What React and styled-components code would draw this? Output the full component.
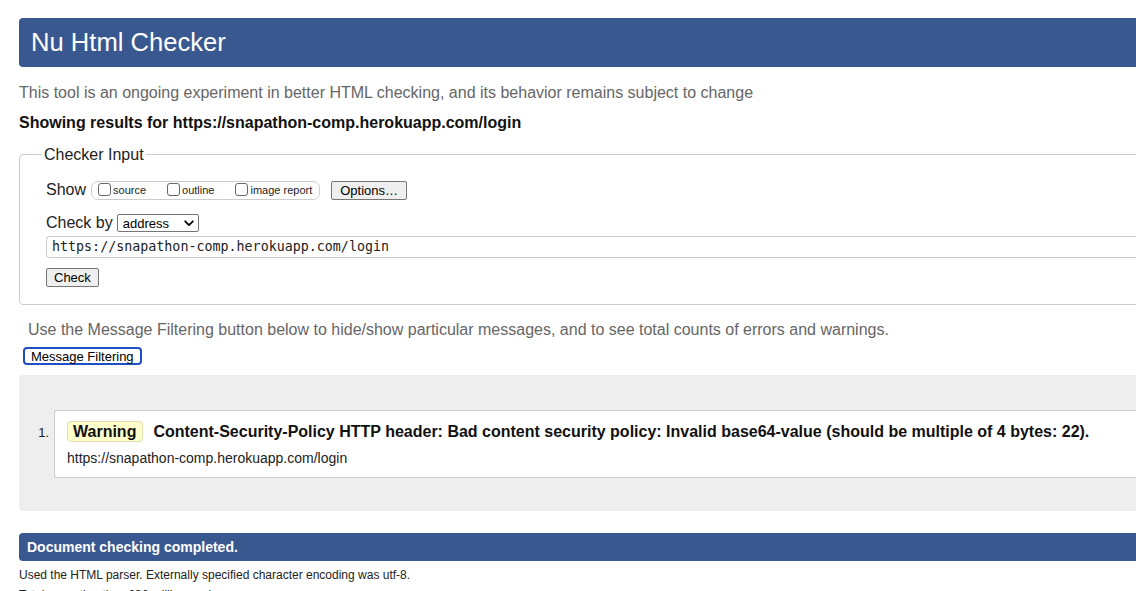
import React from "react";
import styled, { createGlobalStyle } from "styled-components";

const Global = createGlobalStyle`
  html, body { margin: 0; padding: 0; overflow: hidden; background: #fff; }
  body { font-family: "Liberation Sans", Arial, Helvetica, sans-serif; color: #000; }
  * { box-sizing: border-box; }
`;

const Page = styled.div`
  width: 1220px;
  padding: 18px 0 0 19px;
`;

const Header = styled.h1`
  margin: 0;
  height: 49px;
  background: #3a5890;
  border-radius: 4px;
  color: #fff;
  font-weight: normal;
  font-size: 25.6px;
  line-height: 49px;
  padding-left: 12px;
`;

const Intro = styled.p`
  margin: ${(p) => p.$mt}px 0 0 ${(p) => p.$ml || 0}px;
  font-size: 16px;
  line-height: 20px;
  color: ${(p) => (p.$strong ? "#111" : "#666")};
  font-weight: ${(p) => (p.$strong ? "bold" : "normal")};
  white-space: nowrap;
`;

const Fieldset = styled.fieldset`
  margin: 12px 0 0 0;
  border: 1px solid #ccc;
  border-radius: 4px;
  padding: 16px 0 17px 26px;
  min-width: 0;
`;

const Legend = styled.legend`
  font-size: 16px;
  line-height: 19px;
  padding: 0 2px;
  margin-left: -4px;
  color: #222;
`;

const Row = styled.div`
  display: flex;
  align-items: center;
  height: ${(p) => p.$h || 20}px;
  margin-top: ${(p) => p.$mt || 0}px;
  gap: ${(p) => p.$gap || 0}px;
`;

const Label = styled.span`
  font-size: 16px;
  color: #222;
  line-height: 20px;
`;

const Pill = styled.div`
  display: flex;
  align-items: center;
  height: 19px;
  margin-left: 5px;
  padding: 0 7px 0 6px;
  border: 1px solid #ccc;
  border-radius: 7px;
  gap: 21px;
`;

const CheckItem = styled.label`
  display: flex;
  align-items: center;
  gap: 2px;
  font-size: 11px;
  color: #222;
`;

const Box = styled.input`
  appearance: none;
  -webkit-appearance: none;
  width: 13px;
  height: 13px;
  margin: -2px 0 0 0;
  border: 1px solid #666;
  border-radius: 3px;
  background: #fff;
`;

const Button = styled.button`
  font-family: "Liberation Sans", Arial, sans-serif;
  font-size: 13px;
  height: ${(p) => p.$h || 19}px;
  padding: 0 ${(p) => p.$px || 6}px;
  margin-left: ${(p) => p.$ml || 0}px;
  margin-top: ${(p) => p.$mt || 0}px;
  background: ${(p) => (p.$focus ? "#fff" : "#efefef")};
  border: ${(p) => (p.$focus ? "2px solid #1f4fc4" : "1px solid #767676")};
  border-radius: ${(p) => (p.$focus ? 4 : 2)}px;
  color: #000;
  line-height: 1;
  display: inline-flex;
  align-items: center;
`;

const Select = styled.div`
  display: inline-flex;
  align-items: center;
  justify-content: space-between;
  width: 82px;
  height: 18px;
  margin-left: 4px;
  padding: 0 4px 0 5px;
  border: 1px solid #767676;
  border-radius: 2px;
  font-size: 13px;
  color: #000;
  background: #fff;
`;

const UrlInput = styled.div`
  margin-top: 3px;
  height: 22px;
  border: 1px solid #ccc;
  border-right: none;
  border-radius: 4px 0 0 4px;
  padding-left: 5px;
  font-family: "DejaVu Sans Mono", "Liberation Mono", monospace;
  font-size: 13.33px;
  line-height: 20px;
  color: #222;
`;

const ButtonRow = styled.div`
  margin-top: 10px;
  display: flex;
`;

const Results = styled.div`
  margin-top: 10px;
  background: #eee;
  border-radius: 4px;
  padding: 35px 0 33px 0;
  display: flex;
`;

const Marker = styled.span`
  width: 35px;
  padding-right: 5px;
  padding-top: 12px;
  text-align: right;
  font-size: 13px;
  line-height: 21px;
  color: #222;
`;

const Card = styled.div`
  flex: 1;
  background: #fff;
  border: 1px solid #ccc;
  border-right: none;
  border-radius: 3px 0 0 3px;
  padding: 10px 0 10px 12px;
`;

const MsgLine = styled.div`
  display: flex;
  align-items: center;
  gap: 10px;
  font-size: 16px;
  font-weight: bold;
  color: #111;
  white-space: nowrap;
  height: 21px;
`;

const Badge = styled.span`
  display: inline-flex;
  align-items: center;
  height: 21px;
  padding: 0 6px 0 5px;
  background: #ffffcc;
  border: 1px solid #dedeb0;
  border-radius: 4px;
  font-weight: bold;
`;

const Location = styled.div`
  margin-top: 8px;
  font-size: 14px;
  line-height: 17px;
  color: #222;
`;

const DoneBar = styled.h2`
  margin: 22px 0 0 0;
  height: 28px;
  background: #3a5890;
  border-radius: 4px;
  color: #fff;
  font-size: 14px;
  font-weight: bold;
  line-height: 28px;
  padding-left: 8px;
`;

const Note = styled.p`
  margin: ${(p) => p.$mt}px 0 0 0;
  font-size: 12px;
  line-height: 18px;
  color: #222;
`;

const Chevron = () => (
  <svg width="10" height="7" viewBox="0 0 10 7">
    <path d="M1.2 1.3 L5 5.1 L8.8 1.3" fill="none" stroke="#000" strokeWidth="1.8" strokeLinecap="round" strokeLinejoin="round" />
  </svg>
);

const url = "https://snapathon-comp.herokuapp.com/login";

export default function App() {
  return (
    <>
      <Global />
      <Page>
        <Header>Nu Html Checker</Header>
        <Intro $mt={16}>
          This tool is an ongoing experiment in better HTML checking, and its behavior remains subject to change
        </Intro>
        <Intro $mt={10} $strong>
          Showing results for {url}
        </Intro>
        <Fieldset>
          <Legend>Checker Input</Legend>
          <Row>
            <Label>Show</Label>
            <Pill>
              <CheckItem>
                <Box type="checkbox" />
                source
              </CheckItem>
              <CheckItem>
                <Box type="checkbox" />
                outline
              </CheckItem>
              <CheckItem>
                <Box type="checkbox" />
                image report
              </CheckItem>
            </Pill>
            <Button $ml={11} $px={8}>Options…</Button>
          </Row>
          <Row $mt={13}>
            <Label>Check by</Label>
            <Select>
              address
              <Chevron />
            </Select>
          </Row>
          <UrlInput>{url}</UrlInput>
          <ButtonRow>
            <Button $px={7}>Check</Button>
          </ButtonRow>
        </Fieldset>
        <Intro $mt={15} $ml={9}>
          Use the Message Filtering button below to hide/show particular messages, and to see total counts of errors and warnings.
        </Intro>
        <Button $focus $h={18} $ml={4} $mt={7} $px={6}>Message Filtering</Button>
        <Results>
          <Marker>1.</Marker>
          <Card>
            <MsgLine>
              <Badge>Warning</Badge>
              Content-Security-Policy HTTP header: Bad content security policy: Invalid base64-value (should be multiple of 4 bytes: 22).
            </MsgLine>
            <Location>{url}</Location>
          </Card>
        </Results>
        <DoneBar>Document checking completed.</DoneBar>
        <Note $mt={5}>Used the HTML parser. Externally specified character encoding was utf-8.</Note>
        <Note $mt={2}>Total execution time 236 milliseconds.</Note>
      </Page>
    </>
  );
}
